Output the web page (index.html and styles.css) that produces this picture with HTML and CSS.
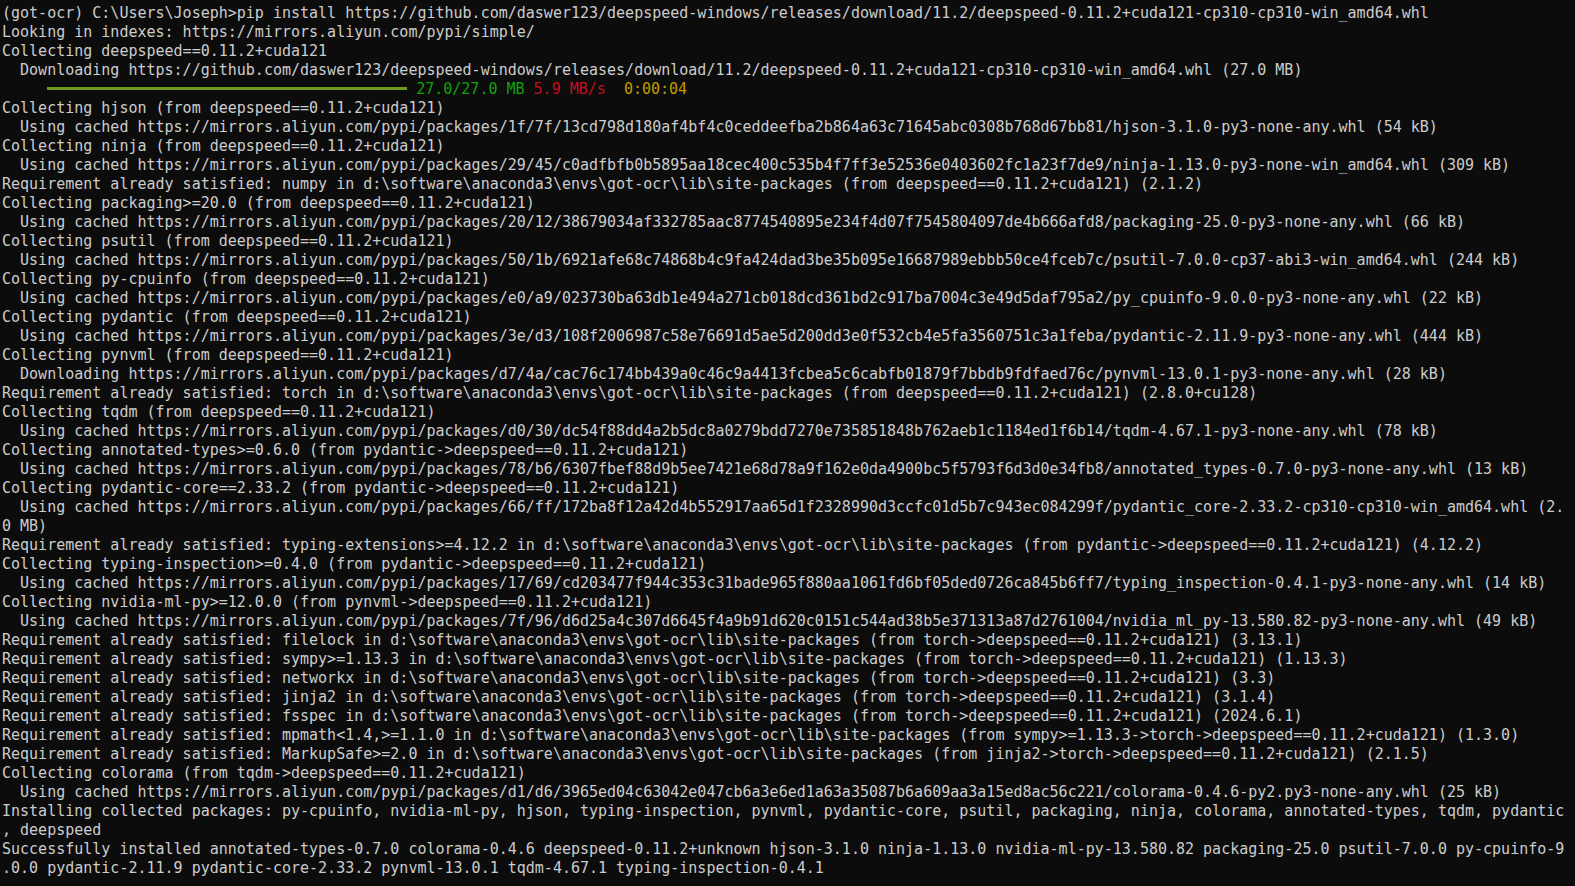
FILE: index.html
```html
<!DOCTYPE html>
<html lang="en">
<head>
  <meta charset="UTF-8" />
  <title>Command Prompt - pip install</title>
  <link rel="stylesheet" href="styles.css">
</head>
<body>

  <pre class="console">(got-ocr) C:\Users\Joseph>pip install https://github.com/daswer123/deepspeed-windows/releases/download/11.2/deepspeed-0.11.2+cuda121-cp310-cp310-win_amd64.whl
Looking in indexes: https://mirrors.aliyun.com/pypi/simple/
Collecting deepspeed==0.11.2+cuda121
  Downloading https://github.com/daswer123/deepspeed-windows/releases/download/11.2/deepspeed-0.11.2+cuda121-cp310-cp310-win_amd64.whl (27.0 MB)
     <span class="bar"></span> <span class="green">27.0/27.0 MB</span> <span class="red">5.9 MB/s</span>  <span class="yellow">0:00:04</span>
Collecting hjson (from deepspeed==0.11.2+cuda121)
  Using cached https://mirrors.aliyun.com/pypi/packages/1f/7f/13cd798d180af4bf4c0ceddeefba2b864a63c71645abc0308b768d67bb81/hjson-3.1.0-py3-none-any.whl (54 kB)
Collecting ninja (from deepspeed==0.11.2+cuda121)
  Using cached https://mirrors.aliyun.com/pypi/packages/29/45/c0adfbfb0b5895aa18cec400c535b4f7ff3e52536e0403602fc1a23f7de9/ninja-1.13.0-py3-none-win_amd64.whl (309 kB)
Requirement already satisfied: numpy in d:\software\anaconda3\envs\got-ocr\lib\site-packages (from deepspeed==0.11.2+cuda121) (2.1.2)
Collecting packaging&gt;=20.0 (from deepspeed==0.11.2+cuda121)
  Using cached https://mirrors.aliyun.com/pypi/packages/20/12/38679034af332785aac8774540895e234f4d07f7545804097de4b666afd8/packaging-25.0-py3-none-any.whl (66 kB)
Collecting psutil (from deepspeed==0.11.2+cuda121)
  Using cached https://mirrors.aliyun.com/pypi/packages/50/1b/6921afe68c74868b4c9fa424dad3be35b095e16687989ebbb50ce4fceb7c/psutil-7.0.0-cp37-abi3-win_amd64.whl (244 kB)
Collecting py-cpuinfo (from deepspeed==0.11.2+cuda121)
  Using cached https://mirrors.aliyun.com/pypi/packages/e0/a9/023730ba63db1e494a271cb018dcd361bd2c917ba7004c3e49d5daf795a2/py_cpuinfo-9.0.0-py3-none-any.whl (22 kB)
Collecting pydantic (from deepspeed==0.11.2+cuda121)
  Using cached https://mirrors.aliyun.com/pypi/packages/3e/d3/108f2006987c58e76691d5ae5d200dd3e0f532cb4e5fa3560751c3a1feba/pydantic-2.11.9-py3-none-any.whl (444 kB)
Collecting pynvml (from deepspeed==0.11.2+cuda121)
  Downloading https://mirrors.aliyun.com/pypi/packages/d7/4a/cac76c174bb439a0c46c9a4413fcbea5c6cabfb01879f7bbdb9fdfaed76c/pynvml-13.0.1-py3-none-any.whl (28 kB)
Requirement already satisfied: torch in d:\software\anaconda3\envs\got-ocr\lib\site-packages (from deepspeed==0.11.2+cuda121) (2.8.0+cu128)
Collecting tqdm (from deepspeed==0.11.2+cuda121)
  Using cached https://mirrors.aliyun.com/pypi/packages/d0/30/dc54f88dd4a2b5dc8a0279bdd7270e735851848b762aeb1c1184ed1f6b14/tqdm-4.67.1-py3-none-any.whl (78 kB)
Collecting annotated-types&gt;=0.6.0 (from pydantic-&gt;deepspeed==0.11.2+cuda121)
  Using cached https://mirrors.aliyun.com/pypi/packages/78/b6/6307fbef88d9b5ee7421e68d78a9f162e0da4900bc5f5793f6d3d0e34fb8/annotated_types-0.7.0-py3-none-any.whl (13 kB)
Collecting pydantic-core==2.33.2 (from pydantic-&gt;deepspeed==0.11.2+cuda121)
  Using cached https://mirrors.aliyun.com/pypi/packages/66/ff/172ba8f12a42d4b552917aa65d1f2328990d3ccfc01d5b7c943ec084299f/pydantic_core-2.33.2-cp310-cp310-win_amd64.whl (2.
0 MB)
Requirement already satisfied: typing-extensions&gt;=4.12.2 in d:\software\anaconda3\envs\got-ocr\lib\site-packages (from pydantic-&gt;deepspeed==0.11.2+cuda121) (4.12.2)
Collecting typing-inspection&gt;=0.4.0 (from pydantic-&gt;deepspeed==0.11.2+cuda121)
  Using cached https://mirrors.aliyun.com/pypi/packages/17/69/cd203477f944c353c31bade965f880aa1061fd6bf05ded0726ca845b6ff7/typing_inspection-0.4.1-py3-none-any.whl (14 kB)
Collecting nvidia-ml-py&gt;=12.0.0 (from pynvml-&gt;deepspeed==0.11.2+cuda121)
  Using cached https://mirrors.aliyun.com/pypi/packages/7f/96/d6d25a4c307d6645f4a9b91d620c0151c544ad38b5e371313a87d2761004/nvidia_ml_py-13.580.82-py3-none-any.whl (49 kB)
Requirement already satisfied: filelock in d:\software\anaconda3\envs\got-ocr\lib\site-packages (from torch-&gt;deepspeed==0.11.2+cuda121) (3.13.1)
Requirement already satisfied: sympy&gt;=1.13.3 in d:\software\anaconda3\envs\got-ocr\lib\site-packages (from torch-&gt;deepspeed==0.11.2+cuda121) (1.13.3)
Requirement already satisfied: networkx in d:\software\anaconda3\envs\got-ocr\lib\site-packages (from torch-&gt;deepspeed==0.11.2+cuda121) (3.3)
Requirement already satisfied: jinja2 in d:\software\anaconda3\envs\got-ocr\lib\site-packages (from torch-&gt;deepspeed==0.11.2+cuda121) (3.1.4)
Requirement already satisfied: fsspec in d:\software\anaconda3\envs\got-ocr\lib\site-packages (from torch-&gt;deepspeed==0.11.2+cuda121) (2024.6.1)
Requirement already satisfied: mpmath&lt;1.4,&gt;=1.1.0 in d:\software\anaconda3\envs\got-ocr\lib\site-packages (from sympy&gt;=1.13.3-&gt;torch-&gt;deepspeed==0.11.2+cuda121) (1.3.0)
Requirement already satisfied: MarkupSafe&gt;=2.0 in d:\software\anaconda3\envs\got-ocr\lib\site-packages (from jinja2-&gt;torch-&gt;deepspeed==0.11.2+cuda121) (2.1.5)
Collecting colorama (from tqdm-&gt;deepspeed==0.11.2+cuda121)
  Using cached https://mirrors.aliyun.com/pypi/packages/d1/d6/3965ed04c63042e047cb6a3e6ed1a63a35087b6a609aa3a15ed8ac56c221/colorama-0.4.6-py2.py3-none-any.whl (25 kB)
Installing collected packages: py-cpuinfo, nvidia-ml-py, hjson, typing-inspection, pynvml, pydantic-core, psutil, packaging, ninja, colorama, annotated-types, tqdm, pydantic
, deepspeed
Successfully installed annotated-types-0.7.0 colorama-0.4.6 deepspeed-0.11.2+unknown hjson-3.1.0 ninja-1.13.0 nvidia-ml-py-13.580.82 packaging-25.0 psutil-7.0.0 py-cpuinfo-9
.0.0 pydantic-2.11.9 pydantic-core-2.33.2 pynvml-13.0.1 tqdm-4.67.1 typing-inspection-0.4.1</pre>

</body>
</html>
```

FILE: styles.css
```css
* {
  box-sizing: border-box;
}

html, body {
  margin: 0;
  padding: 0;
  background-color: #0c0c0c;
  min-height: 100vh;
  overflow: hidden;
}

.console {
  margin: 0;
  padding: 4px 0 0 2px;
  font-family: 'DejaVu Sans Mono', 'Liberation Mono', monospace;
  font-size: 15px;
  line-height: 19px;
  color: #cccccc;
  white-space: pre;
}

.bar {
  display: inline-block;
  width: 360px;
  height: 3px;
  vertical-align: 4px;
  background-color: #729c1f;
}

.green {
  color: #13a10e;
}

.red {
  color: #c50f1f;
}

.yellow {
  color: #c19c00;
}
```
